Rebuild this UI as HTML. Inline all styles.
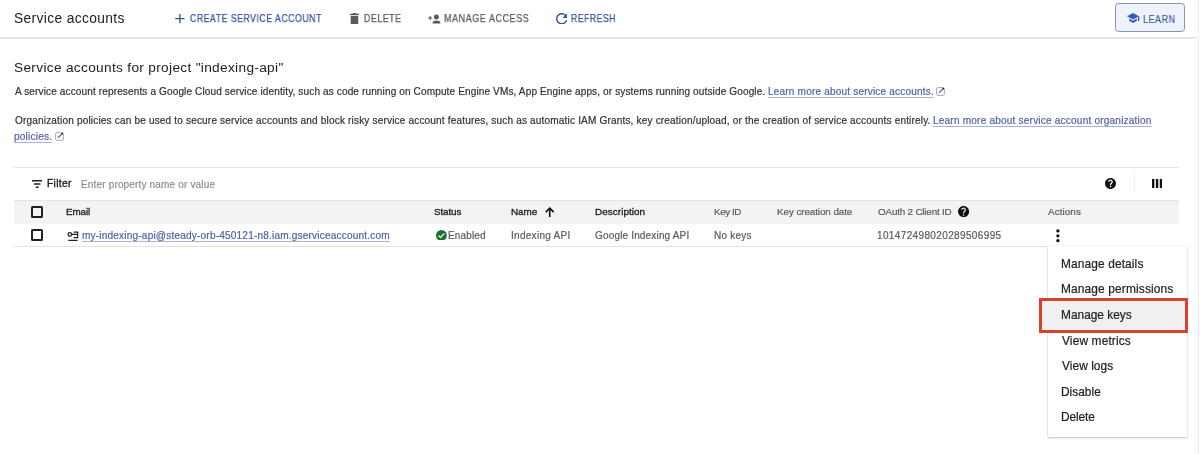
<!DOCTYPE html>
<html><head><meta charset="utf-8"><title>Service accounts</title>
<style>
html,body{margin:0;padding:0;background:#fff;width:1200px;height:454px;overflow:hidden;position:relative}
body{font-family:"Liberation Sans",sans-serif}
.t{position:absolute;line-height:1;white-space:nowrap;will-change:transform}
.r{position:absolute}
</style></head><body>
<div class="r" style="left:0px;top:37px;width:1197px;height:1.5px;background:#e6e6e6"></div>
<div class="r" style="left:1197.5px;top:0px;width:1.5px;height:454px;background:#ececec"></div>
<div class="t" style="left:14.08px;top:11.92px;font-size:13.8px;color:#202124;letter-spacing:0.354px;">Service accounts</div>
<svg class="r" style="left:175px;top:13.7px" width="10" height="9.5" viewBox="0 0 10 9.5"><path d="M4.9 0V9.3M0.2 4.65H9.6" stroke="#37549c" stroke-width="1.4"/></svg>
<div class="t" style="left:189.56px;top:13.75px;font-size:10.1px;color:#37549c;letter-spacing:0.600px;transform:scaleX(0.8647);transform-origin:0 0;-webkit-text-stroke:0.25px currentColor;">CREATE SERVICE ACCOUNT</div>
<svg class="r" style="left:349.8px;top:12.9px" width="9" height="11" viewBox="0 0 9 11"><path d="M3 0h3l0.6 0.7H9v1.3H0V0.7h2.4z" fill="#575b60"/><path d="M0.7 2.8h7.6v7.1c0 0.6-0.5 1.1-1.1 1.1H1.8c-0.6 0-1.1-0.5-1.1-1.1z" fill="#575b60"/></svg>
<div class="t" style="left:364.09px;top:13.75px;font-size:10.1px;color:#575b60;letter-spacing:0.600px;transform:scaleX(0.8740);transform-origin:0 0;-webkit-text-stroke:0.25px currentColor;">DELETE</div>
<svg class="r" style="left:427.5px;top:13.5px" width="13" height="10" viewBox="0 0 13 10"><path d="M2.2 1.9V6.1M0.1 4H4.3" stroke="#575b60" stroke-width="1.1"/><circle cx="8.4" cy="2.9" r="2.5" fill="#575b60"/><path d="M4.4 8.9c0-1.6 2.7-2.4 4.05-2.4s4.05 0.8 4.05 2.4c0 0.3-0.2 0.5-0.5 0.5H4.9c-0.3 0-0.5-0.2-0.5-0.5z" fill="#575b60"/></svg>
<div class="t" style="left:443.98px;top:13.75px;font-size:10.1px;color:#575b60;letter-spacing:0.600px;transform:scaleX(0.8946);transform-origin:0 0;-webkit-text-stroke:0.25px currentColor;">MANAGE ACCESS</div>
<svg class="r" style="left:555.6px;top:12.6px" width="11.6" height="11.6" viewBox="4 4 16.2 16.2"><path fill="#37549c" d="M17.65 6.35C16.2 4.9 14.21 4 12 4c-4.42 0-7.99 3.58-7.99 8s3.57 8 7.99 8c3.73 0 6.840-2.55 7.73-6h-2.08c-.82 2.33-3.04 4-5.65 4-3.31 0-6-2.690-6-6s2.69-6 6-6c1.66 0 3.14.69 4.22 1.78L13 11h7V4l-2.35 2.35z"/></svg>
<div class="t" style="left:571.31px;top:13.75px;font-size:10.1px;color:#37549c;letter-spacing:0.600px;transform:scaleX(0.8564);transform-origin:0 0;-webkit-text-stroke:0.25px currentColor;">REFRESH</div>
<div class="r" style="left:1115.3px;top:3.2px;width:70.2px;height:28.4px;border:1px solid #8791b3;border-radius:3.5px;background:#eef2fb;box-sizing:border-box"></div>
<svg class="r" style="left:1127px;top:13px" width="12.5" height="11" viewBox="0 0 12.5 11"><path d="M6 0L0 3.3 6 6.6 12 3.3z" fill="#3058bd"/><path d="M2.2 5.6v2.2L6 10l3.8-2.2V5.6L6 7.8z" fill="#3058bd"/><rect x="11" y="3.5" width="1.3" height="4.5" fill="#3058bd"/></svg>
<div class="t" style="left:1142.58px;top:15.05px;font-size:10.1px;color:#3d5a98;letter-spacing:0.600px;transform:scaleX(0.8891);transform-origin:0 0;-webkit-text-stroke:0.12px currentColor;">LEARN</div>
<div class="t" style="left:14.38px;top:60.60px;font-size:13.7px;color:#202124;letter-spacing:0.310px;">Service accounts for project &quot;indexing-api&quot;</div>
<div class="t" style="left:15.00px;top:86.99px;font-size:10.05px;color:#303236;letter-spacing:0.124px;-webkit-text-stroke:0.2px currentColor;">A service account represents a Google Cloud service identity, such as code running on Compute Engine VMs, App Engine apps, or systems running outside Google.</div>
<div class="t" style="left:768.10px;top:86.99px;font-size:10.05px;color:#5063a8;letter-spacing:0.184px;-webkit-text-stroke:0.2px currentColor;text-decoration:underline;text-decoration-skip-ink:none;text-decoration-color:#a9b3d3;text-underline-offset:2.3px;">Learn more about service accounts.</div>
<svg class="r" style="left:936px;top:86.9px" width="9" height="9" viewBox="0 0 9 9"><rect x="0.6" y="0.6" width="7.8" height="7.8" rx="1.3" fill="none" stroke="#a3a9c6" stroke-width="1"/><path d="M2.8 5.9L7 1.9" stroke="#4d5273" stroke-width="1.1"/><circle cx="7.3" cy="1.6" r="0.85" fill="#222"/></svg>
<div class="t" style="left:14.55px;top:116.29px;font-size:10.05px;color:#303236;letter-spacing:0.168px;-webkit-text-stroke:0.2px currentColor;">Organization policies can be used to secure service accounts and block risky service account features, such as automatic IAM Grants, key creation/upload, or the creation of service accounts entirely.</div>
<div class="t" style="left:932.60px;top:116.29px;font-size:10.05px;color:#5063a8;letter-spacing:0.204px;-webkit-text-stroke:0.2px currentColor;text-decoration:underline;text-decoration-skip-ink:none;text-decoration-color:#a9b3d3;text-underline-offset:2.3px;">Learn more about service account organization</div>
<div class="t" style="left:14.35px;top:132.29px;font-size:10.05px;color:#5063a8;letter-spacing:0.222px;-webkit-text-stroke:0.2px currentColor;text-decoration:underline;text-decoration-skip-ink:none;text-decoration-color:#a9b3d3;text-underline-offset:2.3px;">policies.</div>
<svg class="r" style="left:55px;top:131.9px" width="9" height="9" viewBox="0 0 9 9"><rect x="0.6" y="0.6" width="7.8" height="7.8" rx="1.3" fill="none" stroke="#a3a9c6" stroke-width="1"/><path d="M2.8 5.9L7 1.9" stroke="#4d5273" stroke-width="1.1"/><circle cx="7.3" cy="1.6" r="0.85" fill="#222"/></svg>
<div class="r" style="left:14px;top:166.5px;width:1165px;height:1px;background:#e3e3e3"></div>
<svg class="r" style="left:31.5px;top:179.7px" width="10.5" height="8" viewBox="0 0 10.5 8"><path d="M0 0.7h10.5M2 4h6.5M3.9 7.3h2.7" stroke="#202124" stroke-width="1.4"/></svg>
<div class="t" style="left:46.78px;top:178.97px;font-size:10.2px;color:#202124;letter-spacing:0.345px;-webkit-text-stroke:0.35px currentColor;">Filter</div>
<div class="t" style="left:81.20px;top:179.84px;font-size:10px;color:#8a8e93;letter-spacing:0.165px;-webkit-text-stroke:0.2px currentColor;">Enter property name or value</div>
<svg class="r" style="left:1105.4px;top:178.2px" width="11" height="11" viewBox="2 2 20 20"><path fill="#111" d="M12 2C6.48 2 2 6.48 2 12s4.48 10 10 10 10-4.48 10-10S17.52 2 12 2zm1.1 17h-2.3v-2.3h2.3V19zm2.1-7.6l-.95.97C13.5 13.1 13.1 13.7 13.1 15.1h-2.3v-.6c0-1.1.45-2.1 1.17-2.83l1.35-1.37c.37-.36.59-.86.59-1.41 0-1.1-.9-2-2-2s-2 .9-2 2H7.6c0-2.4 1.95-4.3 4.3-4.3s4.3 1.95 4.3 4.3c0 .95-.4 1.8-1 2.5z"/></svg>
<div class="r" style="left:1133.5px;top:174px;width:1px;height:18.5px;background:#eeeeee"></div>
<svg class="r" style="left:1151.7px;top:178.8px" width="10.2" height="9.5" viewBox="0 0 10.2 9.5"><rect x="0" y="0" width="2.4" height="9.5" fill="#111"/><rect x="3.9" y="0" width="2.4" height="9.5" fill="#111"/><rect x="7.8" y="0" width="2.4" height="9.5" fill="#111"/></svg>
<div class="r" style="left:14px;top:200px;width:1165px;height:23.8px;background:#f3f3f3"></div>
<div class="r" style="left:14px;top:199.5px;width:1165px;height:1px;background:#e3e3e3"></div>
<div class="r" style="left:30.8px;top:206.2px;width:12.3px;height:12.3px;border:2px solid #202124;border-radius:1.5px;box-sizing:border-box"></div>
<div class="t" style="left:65.51px;top:206.82px;font-size:9.9px;color:#202124;letter-spacing:-0.129px;-webkit-text-stroke:0.32px currentColor;">Email</div>
<div class="t" style="left:434.25px;top:206.82px;font-size:9.9px;color:#202124;letter-spacing:-0.135px;-webkit-text-stroke:0.32px currentColor;">Status</div>
<div class="t" style="left:510.91px;top:206.82px;font-size:9.9px;color:#202124;letter-spacing:-0.049px;-webkit-text-stroke:0.32px currentColor;">Name</div>
<svg class="r" style="left:545.2px;top:206.8px" width="9.5" height="10.2" viewBox="0 0 9.5 10.2"><path d="M4.75 1.2V10.2M0.8 5.1L4.75 1.1 8.7 5.1" fill="none" stroke="#111" stroke-width="1.6"/></svg>
<div class="t" style="left:594.71px;top:206.82px;font-size:9.9px;color:#202124;letter-spacing:0.069px;-webkit-text-stroke:0.32px currentColor;">Description</div>
<div class="t" style="left:714.21px;top:206.62px;font-size:9.9px;color:#575b60;letter-spacing:-0.443px;-webkit-text-stroke:0.2px currentColor;">Key ID</div>
<div class="t" style="left:776.71px;top:206.62px;font-size:9.9px;color:#575b60;letter-spacing:-0.096px;-webkit-text-stroke:0.2px currentColor;">Key creation date</div>
<div class="t" style="left:877.55px;top:206.62px;font-size:9.9px;color:#575b60;letter-spacing:-0.196px;-webkit-text-stroke:0.2px currentColor;">OAuth 2 Client ID</div>
<svg class="r" style="left:957.8px;top:206.2px" width="11.2" height="11.2" viewBox="2 2 20 20"><path fill="#111" d="M12 2C6.48 2 2 6.48 2 12s4.48 10 10 10 10-4.48 10-10S17.52 2 12 2zm1.1 17h-2.3v-2.3h2.3V19zm2.1-7.6l-.95.97C13.5 13.1 13.1 13.7 13.1 15.1h-2.3v-.6c0-1.1.45-2.1 1.17-2.83l1.35-1.37c.37-.36.59-.86.59-1.41 0-1.1-.9-2-2-2s-2 .9-2 2H7.6c0-2.4 1.95-4.3 4.3-4.3s4.3 1.95 4.3 4.3c0 .95-.4 1.8-1 2.5z"/></svg>
<div class="t" style="left:1048.40px;top:206.62px;font-size:9.9px;color:#575b60;letter-spacing:0.079px;-webkit-text-stroke:0.2px currentColor;">Actions</div>
<div class="r" style="left:14px;top:246.3px;width:1033px;height:1px;background:#e3e3e3"></div>
<div class="r" style="left:30.8px;top:229.2px;width:12.3px;height:12.3px;border:2px solid #202124;border-radius:1.5px;box-sizing:border-box"></div>
<svg class="r" style="left:67px;top:231px" width="11.5" height="10.5" viewBox="0 0 11.5 10.5"><circle cx="2.8" cy="3.4" r="1.75" fill="none" stroke="#202124" stroke-width="1.25"/><path d="M4.5 3.4H10.6M6.6 1H10.6V6.7H6.6M1.3 9.4H10.6" fill="none" stroke="#202124" stroke-width="1.25"/></svg>
<div class="t" style="left:82.04px;top:230.55px;font-size:10.1px;color:#5063a8;letter-spacing:0.173px;-webkit-text-stroke:0.2px currentColor;text-decoration:underline;text-decoration-skip-ink:none;text-decoration-color:#a9b3d3;text-underline-offset:2.3px;">my-indexing-api@steady-orb-450121-n8.iam.gserviceaccount.com</div>
<svg class="r" style="left:436px;top:229.5px" width="10.8" height="10.8" viewBox="0 0 24 24"><circle cx="12" cy="12" r="12" fill="#1c6d34"/><path d="M5.6 12.2l4.3 4.3 8.4-8.6" fill="none" stroke="#d6f5d6" stroke-width="3.2"/></svg>
<div class="t" style="left:448.40px;top:230.63px;font-size:10px;color:#575b60;letter-spacing:0.142px;-webkit-text-stroke:0.2px currentColor;">Enabled</div>
<div class="t" style="left:510.80px;top:230.63px;font-size:10px;color:#575b60;letter-spacing:0.286px;-webkit-text-stroke:0.2px currentColor;">Indexing API</div>
<div class="t" style="left:595.00px;top:230.63px;font-size:10px;color:#575b60;letter-spacing:0.167px;-webkit-text-stroke:0.2px currentColor;">Google Indexing API</div>
<div class="t" style="left:714.20px;top:230.63px;font-size:10px;color:#575b60;letter-spacing:0.217px;-webkit-text-stroke:0.2px currentColor;">No keys</div>
<div class="t" style="left:877.25px;top:230.63px;font-size:10px;color:#575b60;letter-spacing:0.367px;-webkit-text-stroke:0.2px currentColor;">101472498020289506995</div>
<svg class="r" style="left:1054px;top:227px" width="8" height="18" viewBox="0 0 8 18"><circle cx="3.9" cy="3.9" r="1.65" fill="#111"/><circle cx="3.9" cy="8.8" r="1.65" fill="#111"/><circle cx="3.9" cy="13.7" r="1.65" fill="#111"/></svg>
<div class="r" style="left:1048px;top:246px;width:138.5px;height:190.5px;background:#fff;box-shadow:0 1px 2px rgba(0,0,0,0.22),0 0 1px rgba(0,0,0,0.18)"></div>
<div class="r" style="left:1041.5px;top:300.8px;width:143px;height:29px;background:#f0f0f0"></div>
<div class="t" style="left:1061.05px;top:258.73px;font-size:11.9px;color:#202124;letter-spacing:0.130px;-webkit-text-stroke:0.2px currentColor;">Manage details</div>
<div class="t" style="left:1061.05px;top:284.33px;font-size:11.9px;color:#202124;letter-spacing:0.152px;-webkit-text-stroke:0.2px currentColor;">Manage permissions</div>
<div class="t" style="left:1061.05px;top:309.93px;font-size:11.9px;color:#202124;-webkit-text-stroke:0.2px currentColor;">Manage keys</div>
<div class="t" style="left:1061.94px;top:335.53px;font-size:11.9px;color:#202124;letter-spacing:0.149px;-webkit-text-stroke:0.2px currentColor;">View metrics</div>
<div class="t" style="left:1061.94px;top:361.13px;font-size:11.9px;color:#202124;letter-spacing:0.060px;-webkit-text-stroke:0.2px currentColor;">View logs</div>
<div class="t" style="left:1061.05px;top:386.73px;font-size:11.9px;color:#202124;letter-spacing:0.017px;-webkit-text-stroke:0.2px currentColor;">Disable</div>
<div class="t" style="left:1061.05px;top:412.33px;font-size:11.9px;color:#202124;letter-spacing:-0.101px;-webkit-text-stroke:0.2px currentColor;">Delete</div>
<div class="r" style="left:1039.3px;top:298.3px;width:148.7px;height:34.5px;border:3px solid #d9412b;box-sizing:border-box"></div>
</body></html>
